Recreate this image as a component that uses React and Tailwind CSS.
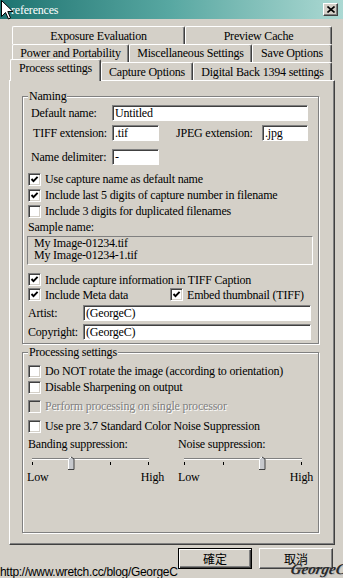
import React from "react";

function Check({ checked, disabled }) {
  return (
    <div
      className={`w-[13px] h-[13px] shrink-0 border border-t-[#808080] border-l-[#808080] border-b-white border-r-white shadow-[inset_1px_1px_0_#404040,inset_-1px_-1px_0_#d4d0c8] flex items-center justify-center ${
        disabled ? "bg-[#d4d0c8]" : "bg-white"
      }`}
    >
      {checked && (
        <svg width="9" height="9" viewBox="0 0 9 9">
          <path d="M1.5 4 L3.5 6.2 L7.6 1.8" stroke="#000" strokeWidth="1.9" fill="none" />
        </svg>
      )}
    </div>
  );
}

function CheckRow({ label, checked, disabled, className = "" }) {
  return (
    <div className={`flex items-center gap-[4px] pl-[5px] whitespace-nowrap ${className}`}>
      <Check checked={checked} disabled={disabled} />
      <span className={disabled ? "text-[#808080] [text-shadow:1px_1px_0_#fff]" : ""}>{label}</span>
    </div>
  );
}

function Field({ w, value }) {
  return (
    <div
      className={`${w} h-[16px] shrink-0 bg-white border border-t-[#808080] border-l-[#808080] border-b-white border-r-white shadow-[inset_1px_1px_0_#404040] pl-[2px] flex items-center whitespace-nowrap`}
    >
      {value}
    </div>
  );
}

function Tab({ w, label, className = "" }) {
  return (
    <div
      className={`${w} h-[18px] shrink-0 flex justify-center pt-[1px] border-t border-l border-r border-t-white border-l-white border-r-[#404040] shadow-[inset_-1px_0_0_#808080] rounded-t-[2px] whitespace-nowrap ${className}`}
    >
      {label}
    </div>
  );
}

function Slider({ ticks, pos }) {
  const x0 = ticks[0];
  const x1 = ticks[ticks.length - 1];
  return (
    <svg width="137" height="16" viewBox="0 0 137 16" className="block">
      <rect x={x0} y="4" width={x1 - x0 + 1} height="1" fill="#808080" />
      <rect x={x0} y="5" width={x1 - x0 + 1} height="1" fill="#ffffff" />
      {ticks.map((t) => (
        <rect key={t} x={t} y="8" width="1" height="3" fill="#000" />
      ))}
      <path
        d={`M${pos - 3} 15.5 L${pos - 3} 5 L${pos} 2.5 L${pos + 3} 5 L${pos + 3} 15.5 Z`}
        fill="#c6c8cc"
      />
      <path d={`M${pos - 2.5} 15 L${pos - 2.5} 5.2 L${pos} 3`} stroke="#ffffff" strokeWidth="1" fill="none" />
      <path d={`M${pos} 3 L${pos + 3} 5 L${pos + 3} 15.5 L${pos - 3} 15.5`} stroke="#404040" strokeWidth="1" fill="none" />
    </svg>
  );
}

export default function App() {
  return (
    <div className="relative w-[343px] h-[578px] overflow-hidden bg-[#d4d0c8] font-['Liberation_Serif','Times_New_Roman',serif] text-[12px] leading-[14px] tracking-[-0.2px] text-black">
      {/* title bar */}
      <div className="h-[19px] flex items-center bg-linear-to-r from-[#1c7471] via-[#58a8a2] to-[#acd9d3]">
        <span className="ml-[11px] text-white">references</span>
        <div className="ml-auto mr-[5px] w-[15px] h-[13px] bg-[#d4d0c8] border border-t-white border-l-white border-r-[#404040] border-b-[#404040] shadow-[inset_-1px_-1px_0_#808080] flex items-center justify-center">
          <svg width="8" height="7" viewBox="0 0 8 7">
            <path d="M0.5 0.5 L7.5 6.5 M7.5 0.5 L0.5 6.5" stroke="#000" strokeWidth="1.6" />
          </svg>
        </div>
      </div>

      <div className="pl-[9px] pt-[7px]">
        {/* tab rows */}
        <div className="flex h-[18px] ml-[3px]">
          <Tab w="w-[173px]" label="Exposure Evaluation" className="pt-[2px]" />
          <Tab w="w-[147px]" label="Preview Cache" className="pt-[2px]" />
        </div>
        <div className="flex h-[18px] ml-[3px]">
          <Tab w="w-[117px]" label="Power and Portability" />
          <Tab w="w-[123px]" label="Miscellaneous Settings" />
          <Tab w="w-[80px]" label="Save Options" />
        </div>
        <div className="flex items-start h-[18px]">
          <div className="relative z-10 ml-[1px] -mt-[3px] w-[91px] h-[22px] shrink-0 bg-[#d4d0c8] flex justify-center pt-[1px] border-t border-l border-r border-t-white border-l-white border-r-[#404040] shadow-[inset_-1px_0_0_#808080] rounded-t-[2px] whitespace-nowrap">
            Process settings
          </div>
          <Tab w="w-[92px]" label="Capture Options" className="pt-[2px]" />
          <Tab w="w-[139px]" label="Digital Back 1394 settings" className="pt-[2px]" />
        </div>

        {/* panel */}
        <div className="w-[326px] h-[465px] border border-t-white border-l-white border-r-[#404040] border-b-[#404040] shadow-[inset_-1px_-1px_0_#808080] pl-[12px] pt-[8px]">
          <fieldset className="w-[297px] border border-[#808080] shadow-[1px_1px_0_#fff,inset_1px_1px_0_#fff] pb-[3px]">
            <legend className="ml-[5px] px-[1px] bg-[#d4d0c8] leading-[14px]">Naming</legend>

            <div className="mt-[2px] h-[16px] flex items-center pl-[8px]">
              <span className="w-[81px] shrink-0">Default name:</span>
              <Field w="w-[196px]" value="Untitled" />
            </div>
            <div className="mt-[4px] h-[16px] flex items-center pl-[8px]">
              <span className="w-[81px] shrink-0 pl-[2px]">TIFF extension:</span>
              <Field w="w-[47px]" value=".tif" />
              <span className="ml-[17px] w-[86px] shrink-0">JPEG extension:</span>
              <Field w="w-[46px]" value=".jpg" />
            </div>
            <div className="mt-[8px] h-[16px] flex items-center pl-[8px]">
              <span className="w-[81px] shrink-0">Name delimiter:</span>
              <Field w="w-[47px]" value="-" />
            </div>

            <div className="mt-[6px]">
              <CheckRow className="h-[16px]" checked label="Use capture name as default name" />
              <CheckRow className="h-[16px]" checked label="Include last 5 digits of capture number in filename" />
              <CheckRow className="h-[16px]" label="Include 3 digits for duplicated filenames" />
            </div>
            <div className="h-[16px] flex items-center pl-[5px]">Sample name:</div>
            <div className="mt-[1px] ml-[4px] w-[286px] h-[29px] border border-t-[#808080] border-l-[#808080] border-b-white border-r-white pl-[6px] leading-[12px]">
              <div>My Image-01234.tif</div>
              <div>My Image-01234-1.tif</div>
            </div>

            <div className="mt-[7px]">
              <CheckRow className="h-[15px]" checked label="Include capture information in TIFF Caption" />
              <div className="h-[15px] flex items-center">
                <CheckRow className="w-[147px] shrink-0" checked label="Include Meta data" />
                <div className="flex items-center gap-[4px] whitespace-nowrap">
                  <Check checked />
                  <span>Embed thumbnail (TIFF)</span>
                </div>
              </div>
            </div>
            <div className="mt-[3px] h-[16px] flex items-center pl-[5px]">
              <span className="w-[55px] shrink-0">Artist:</span>
              <Field w="w-[228px]" value="(GeorgeC)" />
            </div>
            <div className="mt-[3px] h-[16px] flex items-center pl-[5px]">
              <span className="w-[55px] shrink-0">Copyright:</span>
              <Field w="w-[228px]" value="(GeorgeC)" />
            </div>
          </fieldset>

          <fieldset className="mt-[1px] w-[297px] border border-[#808080] shadow-[1px_1px_0_#fff,inset_1px_1px_0_#fff] pb-[48px]">
            <legend className="ml-[5px] px-[1px] bg-[#d4d0c8] leading-[14px]">Processing settings</legend>
            <CheckRow className="mt-[4px] h-[16px]" label="Do NOT rotate the image (according to orientation)" />
            <CheckRow className="h-[16px]" label="Disable Sharpening on output" />
            <CheckRow className="mt-[3px] h-[16px]" disabled label="Perform processing on single processor" />
            <CheckRow className="mt-[4px] h-[16px]" label="Use pre 3.7 Standard Color Noise Suppression" />

            <div className="mt-[2px] flex pl-[4px]">
              <div className="w-[137px] shrink-0">
                <div className="h-[16px] flex items-center pl-[1px]">Banding suppression:</div>
                <div className="mt-[2px] h-[16px]">
                  <Slider ticks={[5, 44, 83, 121]} pos={44} />
                </div>
                <div className="h-[14px] flex justify-between">
                  <span>Low</span>
                  <span>High</span>
                </div>
              </div>
              <div className="ml-[14px] w-[135px] shrink-0">
                <div className="h-[16px] flex items-center">Noise suppression:</div>
                <div className="mt-[2px] h-[16px]">
                  <Slider ticks={[6, 45, 84, 123]} pos={84} />
                </div>
                <div className="h-[14px] flex justify-between">
                  <span>Low</span>
                  <span>High</span>
                </div>
              </div>
            </div>
          </fieldset>
        </div>

        {/* buttons */}
        <div className="mt-[3px] flex justify-end gap-[7px] pr-[10px] tracking-normal font-['Noto_Sans_CJK_TC','Noto_Sans_CJK_SC',sans-serif]">
          <div className="w-[74px] h-[21px] border border-black shadow-[inset_1px_1px_0_#fff,inset_-1px_-1px_0_#404040,inset_-2px_-2px_0_#808080] flex items-center justify-center text-[12px]">
            確定
          </div>
          <div className="w-[74px] h-[21px] border border-t-white border-l-white border-r-[#404040] border-b-[#404040] shadow-[inset_-1px_-1px_0_#808080] flex items-center justify-center text-[12px]">
            取消
          </div>
        </div>
      </div>

      {/* overlays: watermark text, signature, cursor */}
      <div className="absolute left-0 top-[565px] font-['Liberation_Sans',Arial,sans-serif] text-[12px] leading-[14px] tracking-[-0.3px] text-black whitespace-nowrap">
        http://www.wretch.cc/blog/GeorgeC
      </div>
      <div className="absolute right-[-3px] top-[560px] font-['Liberation_Serif',serif] italic font-bold text-[15px] leading-[18px] tracking-normal text-[#2a2a2a] [text-shadow:1px_1px_0_#bbb] -skew-x-12">
        GeorgeC
      </div>
      <svg className="absolute left-[1px] top-0" width="13" height="20" viewBox="0 0 13 20">
        <path d="M0.5 0.5 L0.5 16.5 L4.5 12.5 L7.5 19 L9.5 18 L6.8 11.5 L12 11.5 Z" fill="#fff" stroke="#000" strokeWidth="1" />
      </svg>
    </div>
  );
}
